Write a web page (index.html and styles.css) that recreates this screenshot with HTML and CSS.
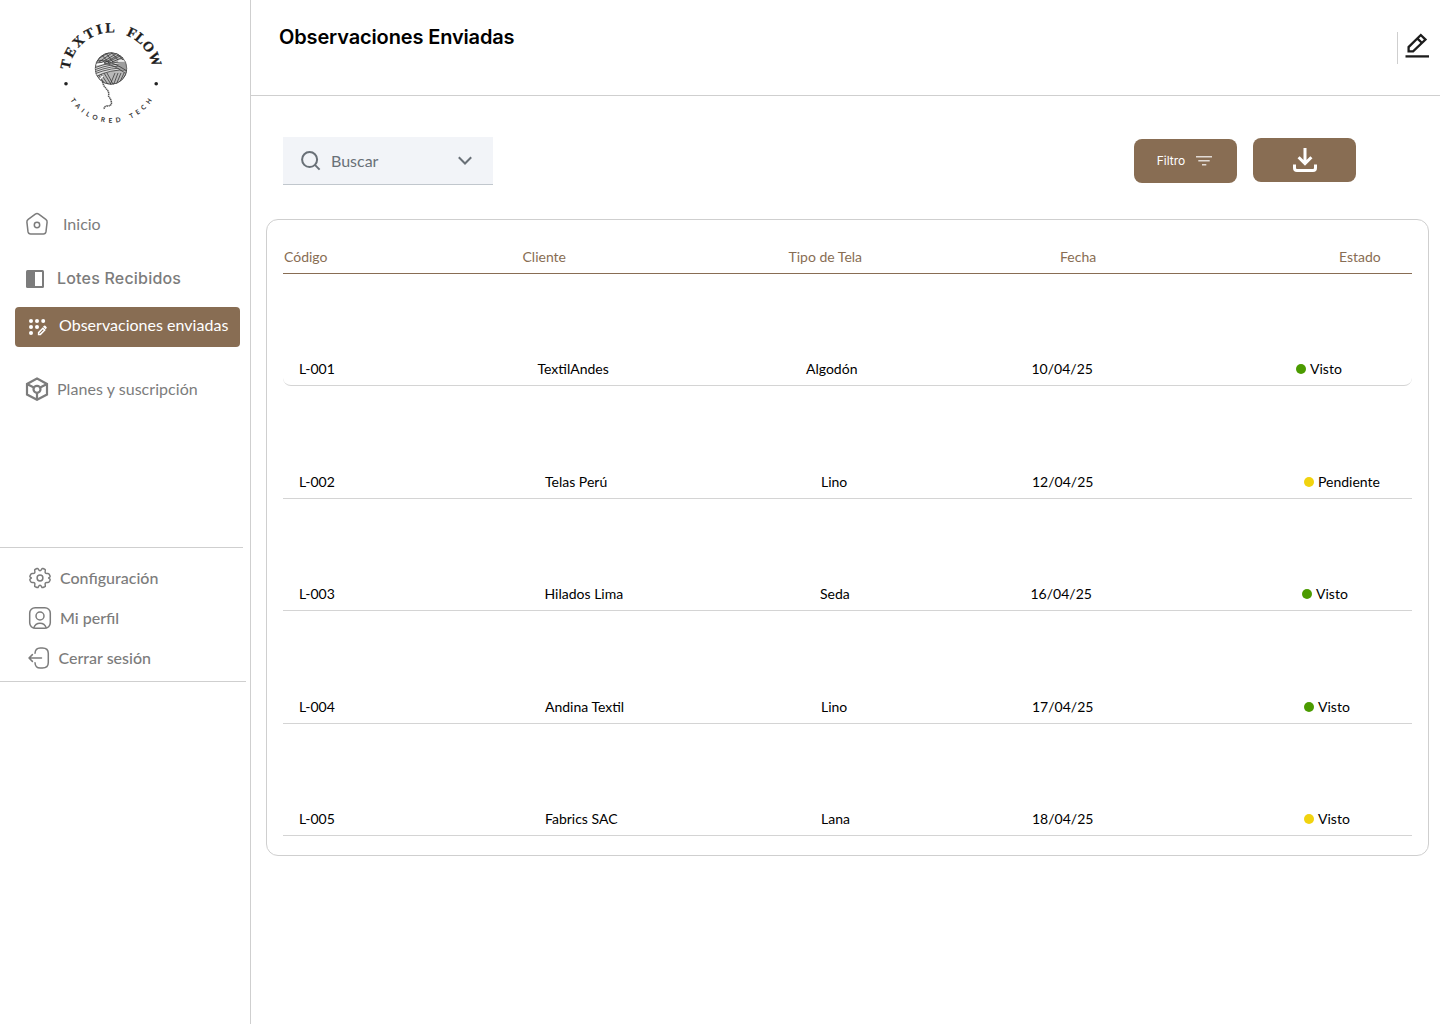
FILE: index.html
```html
<!DOCTYPE html>
<html lang="es">
<head>
<meta charset="utf-8">
<title>Textil Flow - Observaciones Enviadas</title>
<link rel="stylesheet" href="styles.css">
</head>
<body>
<div class="app">
  <aside class="sidebar">
    <svg class="logo" viewBox="50 15 124 120">
      <defs>
        <path id="arc-top" d="M69.4 69.9A42 42 0 0 1 152.900 69.900"/>
        <path id="arc-bottom" d="M70.4 100.1A48.3 48.3 0 0 0 152.6 99.5"/>
        <clipPath id="ball"><circle cx="111" cy="68.5" r="16"/></clipPath>
      </defs>
      <text class="logo-name"><textPath href="#arc-top" textLength="65">TEXTIL</textPath></text>
      <text class="logo-name"><textPath href="#arc-top" startOffset="76.5" textLength="43.5">FLOW</textPath></text>
      <text class="logo-tag"><textPath href="#arc-bottom" textLength="97">TAILORED TECH</textPath></text>
      <circle cx="66" cy="83.7" r="1.8" fill="#222"/><circle cx="156.2" cy="83.7" r="1.8" fill="#222"/>
      <g clip-path="url(#ball)" fill="none" stroke="#333" stroke-width=".75">
        <circle cx="111" cy="68.5" r="16" fill="#b9b9b9"/>
        <path d="M98 59l13-8M99 62l16-11M101 63l18-11M104 63l18-10M108 62l16-8M112 62l14-6"/>
        <path d="M101 54l8 9M105 52l8 10M110 51l9 10M115 51l8 9M119 52l6 7"/>
        <path d="M98 74l8 12M101 74l8 12M104 73l8 13M107 73l7 13M118 73l-5 13M121 73l-5 12M124 73l-5 11M127 72l-6 12M115 73l-5 12"/>
        <path fill="#ddd" d="M94 68q18-7 34-6v8q-18-1-33 7z"/>
        <path d="M94 70q18-7 34-6M94 72q18-7 34-6M94 74q18-7 34-6M96 60q15 0 31 11M96 62q14 0 29 11"/>
        <path stroke="#fff" stroke-width="1.3" d="M96 65l8-2M118 61l9 0M103 76l-3 3"/>
      </g>
      <circle cx="111" cy="68.5" r="15.8" fill="none" stroke="#444" stroke-width=".6"/>
      <path d="M102.5 82q1 4 4 7t2 7q3 4 3 7t-5 3q-3 1-2 3" fill="none" stroke="#555" stroke-width="1.5" stroke-dasharray="1.4 .5"/>
    </svg>
    <nav class="nav">
      <a class="nav-item home">
        <svg width="24" height="24" viewBox="0 0 24 24" class="line"><path d="M10.3 2.1 3.2 7.3Q1.7 8.4 1.9 10.2L3 19.7Q3.4 22 5.6 22H18.4Q20.6 22 21 19.7L22.1 10.2Q22.3 8.4 20.8 7.3L13.7 2.1Q12 1 10.3 2.1Z"/><circle cx="12" cy="13" r="2.7"/></svg>
        <span>Inicio</span>
      </a>
      <a class="nav-item lots">
        <svg width="18" height="18" viewBox="0 0 18 18"><rect width="18" height="18" rx="1.5" fill="#7c7c7c"/><path d="M9 2h7v14H9z" fill="#fff"/></svg>
        <span>Lotes Recibidos</span>
      </a>
      <a class="nav-item active">
        <svg width="20" height="18" viewBox="0 0 20 18" fill="#fff"><circle cx="3" cy="3" r="2"/><circle cx="9" cy="3" r="2"/><circle cx="15.2" cy="3" r="2"/><circle cx="3" cy="9" r="2"/><circle cx="9" cy="9" r="2"/><circle cx="3" cy="15" r="2"/><path d="M10.6 16.4v-1.8l4.3-4.3 1.8 1.8-4.3 4.3z" fill="none" stroke="#fff" stroke-width="1.5"/><path d="m15 8.8 1-1q.7-.5 1.3 0l1.2 1.2q.6.7 0 1.3l-1 1z"/></svg>
        <span>Observaciones enviadas</span>
      </a>
      <a class="nav-item plans">
        <svg width="24" height="24" viewBox="0 0 24 24" fill="none" stroke="#7c7c7c" stroke-width="2.2"><path d="M12 1.5 22 7v10.5L12 22.8 2 17.5V7zM12 15.7v7M9.3 10.7 2 7M14.7 10.7 22 7"/><circle cx="12" cy="12.3" r="3.5"/></svg>
        <span>Planes y suscripción</span>
      </a>
    </nav>
    <nav class="account">
      <a class="acc-item"><svg width="24" height="24" viewBox="0 0 24 24" class="line"><circle cx="12" cy="12" r="2.9"/><path d="M9 2.5Q10 2.2 10.3 3.1 12 6.4 13.7 3.1 14 2.2 15 2.5L16.7 3.2Q17.6 3.6 17.3 4.6 16.3 8 19.7 7.5 20.6 7.4 21.1 8.2L22 9.8Q22.4 10.6 21.7 11.2 19.5 12 21.7 12.9 22.4 13.5 22 14.3L21.1 15.9Q20.6 16.7 19.7 16.6 16.3 16 17.3 19.4 17.6 20.4 16.7 20.8L15 21.5Q14 21.8 13.7 20.9 12 17.7 10.3 20.9 10 21.8 9 21.5L7.3 20.8Q6.4 20.4 6.7 19.4 7.7 16 4.3 16.6 3.4 16.7 2.9 15.9L2 14.3Q1.6 13.5 2.3 12.9 4.5 12 2.3 11.2 1.6 10.6 2 9.8L2.9 8.2Q3.4 7.4 4.3 7.5 7.7 8 6.7 4.6 6.4 3.6 7.3 3.2Z"/></svg><span>Configuración</span></a>
      <a class="acc-item"><svg width="24" height="24" viewBox="0 0 24 24" class="line"><rect x="1.7" y="1.7" width="20.6" height="20.6" rx="5.5"/><circle cx="12" cy="10" r="4"/><path d="M5.8 21.8q1.5-4.6 6.2-4.6t6.2 4.6"/></svg><span>Mi perfil</span></a>
      <a class="acc-item exit"><svg width="24" height="24" viewBox="0 0 24 24" class="line"><path d="M7 7.3Q7.3 2 12.2 2H14.5Q20.3 2 20.3 7.5V16.5Q20.3 22 14.5 22H12.2Q7.3 22 7 16.7M13.5 12H1M4.4 8.6 1 12l3.4 3.4"/></svg><span>Cerrar sesión</span></a>
    </nav>
  </aside>
  <main class="main">
    <header class="topbar">
      <h1>Observaciones Enviadas</h1>
      <button class="edit"><svg width="24" height="26" viewBox="0 0 24 26" fill="none" stroke="#1c1c1c" stroke-width="2.3"><path d="M.5 23.4H24"/><path d="M3.6 18.3v-4.2L15.8 2l4.7 4.6L8.100 18.300zM12.300 5.400l4.700 4.600"/></svg></button>
    </header>
    <section class="tools">
      <div class="search">
        <svg width="20" height="20" viewBox="0 0 20 20" fill="none" stroke="#697077" stroke-width="2"><circle cx="8.6" cy="8.6" r="7.5"/><path d="m13.9 13.9 4.7 4.7"/></svg>
        <span>Buscar</span>
        <svg width="14" height="9" viewBox="0 0 14 9" fill="none" stroke="#697077" stroke-width="2"><path d="m.8 1.300 6.200 6.200L13.200 1.300"/></svg>
      </div>
      <button class="btn filter"><span>Filtro</span><svg width="16" height="10" viewBox="0 0 16 10" fill="#e2dbd5"><path d="M0 0h16v1.5H0zM2.3 4h11.4v1.5H2.3zM6 8h4.3v1.5H6z"/></svg></button>
      <button class="btn download"><svg width="24" height="24" viewBox="0 0 24 24" fill="none" stroke="#fff" stroke-width="3"><path d="M12 0v16M5.6 9.2 12 15.6l6.4-6.4"/><path d="M1.5 16.5V20q0 2.5 2.5 2.5h16q2.5 0 2.5-2.5v-3.5"/></svg></button>
    </section>
    <section class="table">
      <div class="row head"><span>Código</span><span>Cliente</span><span>Tipo de Tela</span><span>Fecha</span><span>Estado</span></div>
      <div class="row first"><span>L-001</span><span>TextilAndes</span><span>Algodón</span><span>10/04/25</span><span class="status seen">Visto</span></div>
      <div class="row"><span>L-002</span><span>Telas Perú</span><span>Lino</span><span>12/04/25</span><span class="status pending">Pendiente</span></div>
      <div class="row third"><span>L-003</span><span>Hilados Lima</span><span>Seda</span><span>16/04/25</span><span class="status seen">Visto</span></div>
      <div class="row"><span>L-004</span><span>Andina Textil</span><span>Lino</span><span>17/04/25</span><span class="status seen">Visto</span></div>
      <div class="row"><span>L-005</span><span>Fabrics SAC</span><span>Lana</span><span>18/04/25</span><span class="status pending">Visto</span></div>
    </section>
  </main>
</div>
</body>
</html>
```
FILE: styles.css
```css
* { box-sizing: border-box; }
body { margin: 0; background: #fff; font-family: Lato, "Liberation Sans", sans-serif; }
button { border: 0; padding: 0; background: none; font: inherit; }
svg { display: block; flex: none; }
.app { display: flex; width: 1440px; height: 1024px; overflow: hidden; }

.sidebar { width: 251px; border-right: 1px solid #cfcfcf; color: #7c7c7c; font-size: 16px; flex: none; }
.logo { width: 124px; height: 120px; margin: 15px 0 0 50px; }
.logo-name { font: bold 14px "Liberation Serif", serif; fill: #1d1d1d; stroke: #1d1d1d; stroke-width: .3px; }
.logo-tag { font: bold 6.5px Lato, sans-serif; fill: #333; word-spacing: 1px; }
.line { fill: none; stroke: #7c7c7c; stroke-width: 1.5; stroke-linecap: round; stroke-linejoin: round; }

.nav { display: flex; flex-direction: column; padding: 69px 10px 0 15px; }
.nav-item { display: flex; align-items: center; height: 40px; line-height: 20px; white-space: nowrap; }
.home { padding-left: 10px; gap: 14px; }
.lots { margin-top: 15px; padding-left: 11px; gap: 13px; font-family: Inter, sans-serif; font-weight: 500; letter-spacing: .2px; }
.lots span { padding-bottom: 2px; }
.active { margin-top: 8px; padding-left: 13px; gap: 11px; background: #886d53; color: #fff; border-radius: 4px; letter-spacing: .02px; }
.active span { padding-bottom: 4px; }
.plans { margin-top: 22px; padding-left: 10px; gap: 8px; letter-spacing: .05px; }

.account { width: 246px; margin-top: 138px; padding: 11px 0 3px 28px; border-bottom: 1px solid #cfcfcf; background: linear-gradient(#cfcfcf, #cfcfcf) 0 0 / 243px 1px no-repeat; height: 135px; }
.acc-item { display: flex; align-items: center; gap: 8px; height: 40px; font-weight: 500; line-height: 20px; }
.acc-item span { padding-bottom: 1px; }
.exit { gap: 6.5px; }

.main { flex: 1; min-width: 0; }
.topbar { display: flex; justify-content: space-between; height: 96px; padding: 24px 10px 0 28px; border-bottom: 1px solid #cfcfcf; }
h1 { margin: 0; font: 600 20px/26px Inter, sans-serif; letter-spacing: -.14px; color: #000; }
.edit { display: flex; align-items: flex-start; width: 33px; height: 32px; margin-top: 8px; padding: 1px 0 0 6.5px; border-left: 1px solid #cfcfcf; }

.tools { display: flex; align-items: flex-start; padding: 41px 84px 0 32px; height: 123px; }
.search { display: flex; align-items: center; width: 210px; height: 48px; padding: 0 21px 0 18px; background: #f2f4f8; border-bottom: 1px solid #c1c7cd; color: #697077; font-size: 16px; }
.search span { flex: 1; padding-left: 10px; }
.btn { display: flex; align-items: center; justify-content: center; width: 103px; height: 44px; border-radius: 8px; background: #886d53; color: #fff; }
.filter { margin: 2px 16px 0 auto; padding: 0 2px 1px 0; gap: 11px; font: 12px Inter, sans-serif; }
.download { margin-top: 1px; }

.table { width: 1163px; height: 637px; margin-left: 15px; padding: 0 16px; border: 1px solid #cfcfcf; border-radius: 12px; font-size: 14px; line-height: 20px; }
.row { display: grid; grid-template-columns: 246px 276px 211px 272px 1fr; align-items: end; height: 112.4px; padding: 0 0 6px 16px; border-bottom: 1px solid #d4d4d4; color: #000; white-space: nowrap; }
.head { grid-template-columns: 238.5px 266px 271.5px 279px 1fr; height: 54px; padding: 0 0 6px 1px; border-color: #886d53; color: #886d53; }
.first { grid-template-columns: 238.5px 268.5px 225.5px 264.5px 1fr; border-radius: 0 0 8px 8px; }
.third { grid-template-columns: 245.5px 275.5px 210.5px 271.5px 1fr; }
.status { display: flex; align-items: center; gap: 4px; }
.status::before { content: ""; width: 10px; height: 10px; border-radius: 50%; background: #4b9b00; }
.pending::before { background: #f1d30f; }
```
